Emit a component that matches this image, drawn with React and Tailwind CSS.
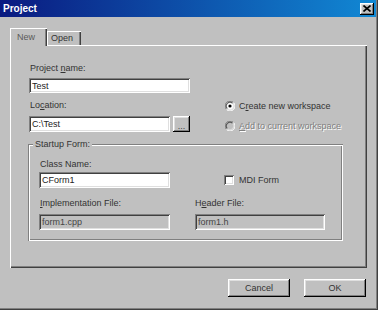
import React from "react";

const SUNKEN =
  "shadow-[inset_1px_1px_0_#808080,inset_-1px_-1px_0_#ffffff,inset_2px_2px_0_#404040,inset_-2px_-2px_0_#dfdfdf]";
const RAISED =
  "shadow-[inset_-1px_-1px_0_#000000,inset_1px_1px_0_#ffffff,inset_-2px_-2px_0_#808080,inset_2px_2px_0_#dfdfdf]";

function U({ children }) {
  return <span className="underline underline-offset-[1px]">{children}</span>;
}

function Label({ children, className = "" }) {
  return (
    <div className={"h-[12px] leading-[12px] text-[9px] text-[#333333] " + className}>
      {children}
    </div>
  );
}

function Input({ value, w, h = "h-[16px]", disabled = false }) {
  return (
    <div
      className={
        SUNKEN +
        " flex items-center pl-[3px] text-[9px] leading-[12px] " +
        w +
        " " +
        h +
        (disabled ? " bg-[#c0c0c0] text-[#454545]" : " bg-white text-[#222222]")
      }
    >
      {value}
    </div>
  );
}

function Radio({ checked, disabled }) {
  return (
    <svg width="10" height="10" viewBox="0 0 10 10" className="shrink-0">
      <circle cx="5" cy="5" r="4" fill={disabled ? "#c0c0c0" : "#ffffff"} />
      <path d="M1.5 8.5 A4.6 4.6 0 0 1 8.5 1.5" stroke="#808080" strokeWidth="1" fill="none" />
      <path d="M8.5 1.5 A4.6 4.6 0 0 1 1.5 8.5" stroke="#ffffff" strokeWidth="1" fill="none" />
      <path d="M2.3 7.7 A3.7 3.7 0 0 1 7.7 2.3" stroke="#404040" strokeWidth="1" fill="none" />
      <path d="M7.7 2.3 A3.7 3.7 0 0 1 2.3 7.7" stroke="#dfdfdf" strokeWidth="1" fill="none" />
      {checked && <circle cx="5" cy="5" r="1.6" fill="#000" />}
    </svg>
  );
}

export default function App() {
  return (
    <div className="font-['Liberation_Sans',Arial,sans-serif] w-[378px] h-[310px] bg-[#c0c0c0] flex flex-col overflow-hidden shadow-[inset_-1px_-1px_0_#404040,inset_-2px_-2px_0_#808080]">
      {/* title bar */}
      <div className="flex h-[17px] mr-[2px] items-center justify-between bg-[linear-gradient(90deg,#0a1a80,#1188d4)] pl-[3px] pr-[2px]">
        <span className="text-white font-bold text-[10px] leading-[12px]">Project</span>
        <div className={RAISED + " bg-[#c0c0c0] w-[14px] h-[12px] flex items-center justify-center"}>
          <svg width="8" height="7" viewBox="0 0 8 7">
            <path d="M0.5 0.5 L7.5 6.5 M7.5 0.5 L0.5 6.5" stroke="#000" strokeWidth="1.6" />
          </svg>
        </div>
      </div>

      {/* tabs */}
      <div className="flex items-end h-[17px] mt-[11px] pl-[10px]">
        <div className="relative z-10 h-[18px] -mb-[1px] w-[37px] bg-[#c0c0c0] shadow-[inset_1px_1px_0_#ffffff,inset_-1px_0_0_#404040,inset_-2px_0_0_#808080] flex items-start pt-[3px] pl-[7px] text-[9px] leading-[12px] text-[#5a5a5a]">
          New
        </div>
        <div className="h-[14px] w-[34px] bg-[#c0c0c0] shadow-[inset_1px_1px_0_#ffffff,inset_-1px_0_0_#404040,inset_-2px_0_0_#808080] flex items-start pt-[1px] pl-[4px] text-[9px] leading-[12px] text-[#333333]">
          Open
        </div>
      </div>

      {/* panel */}
      <div className="relative ml-[10px] w-[357px] h-[223px] shadow-[inset_1px_1px_0_#ffffff,inset_-1px_-1px_0_#404040,inset_-2px_-2px_0_#808080] flex flex-col">
        <div className="flex">
          <div className="flex flex-col ml-[19px] pt-[17px] w-[161px]">
            <Label className="pl-[1px]">
              Project <U>n</U>ame:
            </Label>
            <div className="mt-[4px]">
              <Input value="Test" w="w-[161px]" h="h-[15px]" />
            </div>
            <Label className="mt-[6px] pl-[1px]">
              Lo<U>c</U>ation:
            </Label>
            <div className="mt-[5px] flex gap-[3px]">
              <Input value="C:\Test" w="w-[141px]" />
              <div className={RAISED + " w-[17px] h-[16px] bg-[#c0c0c0] flex items-end justify-center pb-[1px] text-[9px] leading-[9px] text-[#404040]"}>
                ...
              </div>
            </div>
          </div>
          <div className="flex flex-col ml-[35px] pt-[55px]">
            <div className="flex items-center h-[12px] gap-[4px] text-[9px] leading-[12px] text-[#333333]">
              <Radio checked />
              <span>
                C<U>r</U>eate new workspace
              </span>
            </div>
            <div className="flex items-center h-[12px] mt-[8px] gap-[4px] text-[9px] leading-[12px] text-[#808080] [text-shadow:1px_1px_0_#ffffff]">
              <Radio disabled />
              <span>
                <U>A</U>dd to current workspace
              </span>
            </div>
          </div>
        </div>

        {/* group box */}
        <div className="relative mt-[12px] ml-[18px] w-[315px] h-[97px] shadow-[inset_1px_1px_0_#808080,inset_-1px_-1px_0_#ffffff,inset_2px_2px_0_#ffffff,inset_-2px_-2px_0_#808080] flex flex-col pt-[14px] pl-[11px]">
          <div className="absolute left-[5px] -top-[6px] px-[2px] bg-[#c0c0c0] text-[9px] leading-[12px] text-[#333333]">
            Startup Form:
          </div>
          <div className="flex">
            <div className="flex flex-col w-[131px]">
              <Label className="pl-[1px]">Class Name:</Label>
              <div className="mt-[2px]">
                <Input value="CForm1" w="w-[131px]" />
              </div>
            </div>
            <div className="flex items-center ml-[54px] mt-[17px] h-[10px] gap-[5px] text-[9px] leading-[12px] text-[#333333]">
              <div className={SUNKEN + " w-[10px] h-[10px] bg-white"} />
              <span>MDI Form</span>
            </div>
          </div>
          <div className="flex mt-[9px]">
            <div className="flex flex-col w-[131px]">
              <Label className="pl-[1px]">
                <U>I</U>mplementation File:
              </Label>
              <div className="mt-[5px]">
                <Input value="form1.cpp" w="w-[131px]" disabled />
              </div>
            </div>
            <div className="flex flex-col ml-[25px] w-[130px]">
              <Label>
                H<U>e</U>ader File:
              </Label>
              <div className="mt-[5px]">
                <Input value="form1.h" w="w-[130px]" disabled />
              </div>
            </div>
          </div>
        </div>
      </div>

      {/* buttons */}
      <div className="flex mt-[11px] ml-[228px] gap-[14px]">
        <div className={RAISED + " w-[62px] h-[18px] bg-[#c0c0c0] flex items-center justify-center text-[9px] leading-[12px] text-[#333333]"}>
          Cancel
        </div>
        <div className={RAISED + " w-[62px] h-[18px] bg-[#c0c0c0] flex items-center justify-center text-[9px] leading-[12px] text-[#333333]"}>
          OK
        </div>
      </div>
    </div>
  );
}
